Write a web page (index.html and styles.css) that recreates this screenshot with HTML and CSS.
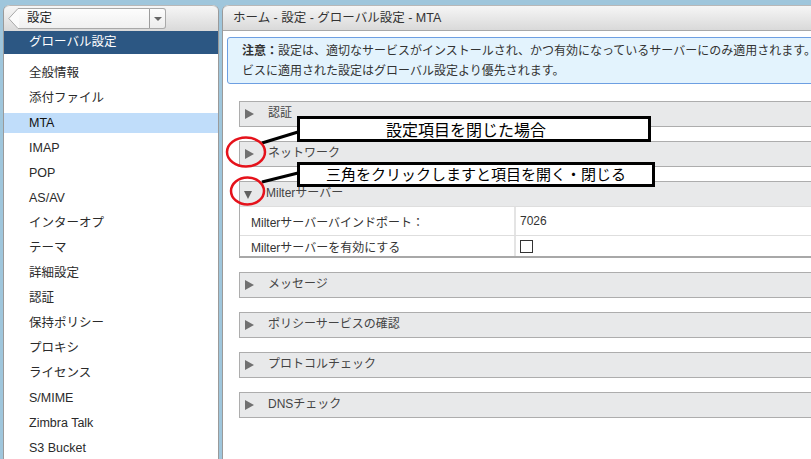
FILE: index.html
```html
<!DOCTYPE html>
<html lang="ja">
<head>
<meta charset="utf-8">
<link rel="stylesheet" href="styles.css">
</head>
<body>
<div class="page">
  <aside class="left">
    <div class="left-head">
      <div class="crumb-btn">
        <svg class="tip" width="11" height="21" viewBox="0 0 11 21"><path d="M11 0.5 L10 0.5 L0.8 10.5 L10 20.5 L11 20.5" fill="#fbfbfb" stroke="#a9a9a9" stroke-width="1"/></svg>
        <div class="crumb-main"><span class="crumb-text">設定</span></div>
        <div class="crumb-drop"><span class="drop-tri"></span></div>
      </div>
    </div>
    <div class="left-sel">グローバル設定</div>
    <ul class="nav">
      <li>全般情報</li>
      <li>添付ファイル</li>
      <li class="active">MTA</li>
      <li>IMAP</li>
      <li>POP</li>
      <li>AS/AV</li>
      <li>インターオプ</li>
      <li>テーマ</li>
      <li>詳細設定</li>
      <li>認証</li>
      <li>保持ポリシー</li>
      <li>プロキシ</li>
      <li>ライセンス</li>
      <li>S/MIME</li>
      <li>Zimbra Talk</li>
      <li>S3 Bucket</li>
    </ul>
  </aside>
  <main class="right">
    <div class="right-head">ホーム - 設定 - グローバル設定 - MTA</div>
    <div class="content">
      <div class="notice"><b>注意：</b>設定は、適切なサービスがインストールされ、かつ有効になっているサーバーにのみ適用されます。サー<br>ビスに適用された設定はグローバル設定より優先されます。</div>
      <div class="sec"><div class="sec-head"><span class="tri-r"></span>認証</div></div>
      <div class="sec"><div class="sec-head"><span class="tri-r"></span>ネットワーク</div></div>
      <div class="sec open">
        <div class="sec-head"><span class="tri-d"></span>Milterサーバー</div>
        <div class="row r1"><div class="lab">Milterサーバーバインドポート：</div><div class="val">7026</div></div>
        <div class="row r2"><div class="lab">Milterサーバーを有効にする</div><div class="val"><span class="chk"></span></div></div>
      </div>
      <div class="sec"><div class="sec-head"><span class="tri-r"></span>メッセージ</div></div>
      <div class="sec"><div class="sec-head"><span class="tri-r"></span>ポリシーサービスの確認</div></div>
      <div class="sec"><div class="sec-head"><span class="tri-r"></span>プロトコルチェック</div></div>
      <div class="sec"><div class="sec-head"><span class="tri-r"></span>DNSチェック</div></div>
    </div>
  </main>
</div>
<svg class="marks" width="811" height="459" viewBox="0 0 811 459">
  <line x1="262" y1="143" x2="298" y2="132" stroke="#000" stroke-width="3"/>
  <line x1="262" y1="182" x2="298" y2="173" stroke="#000" stroke-width="3"/>
  <ellipse cx="246" cy="152" rx="19" ry="14.5" fill="none" stroke="#e5121b" stroke-width="2.5"/>
  <ellipse cx="247.5" cy="191" rx="16.5" ry="13.5" fill="none" stroke="#e5121b" stroke-width="2.5"/>
</svg>
<div class="note note1">設定項目を閉じた場合</div>
<div class="note note2">三角をクリックしますと項目を開く・閉じる</div>
</body>
</html>
```
FILE: styles.css
```css
html, body {
  margin: 0;
  padding: 0;
}
body {
  width: 811px;
  height: 459px;
  overflow: hidden;
  background: #9fc6dc;
  font-family: "Liberation Sans", "Noto Sans CJK JP", sans-serif;
  font-size: 12px;
  color: #333;
  position: relative;
}
.page {
  display: flex;
  padding: 5px 0 0 3px;
  height: 454px;
}
.left {
  width: 214px;
  flex: none;
  background: #fff;
  border: 1px solid #9a9a9a;
  border-top: none;
  border-bottom: none;
  border-radius: 6px 6px 0 0;
  display: flex;
  flex-direction: column;
}
.left-head {
  height: 26px;
  box-sizing: border-box;
  border-top: 1px solid #b8b8b8;
  border-radius: 6px 6px 0 0;
  background: linear-gradient(#f6f6f6, #d9d9d9);
  padding: 2px 0 0 4px;
}
.crumb-btn {
  display: flex;
  height: 21px;
  width: 158px;
}
.tip {
  display: block;
  flex: none;
}
.crumb-main {
  flex: 1;
  height: 21px;
  box-sizing: border-box;
  border-top: 1px solid #a9a9a9;
  border-bottom: 1px solid #a9a9a9;
  background: linear-gradient(#fdfdfd, #f0f0f0);
  display: flex;
  align-items: center;
}
.crumb-text {
  padding-left: 8px;
  font-size: 12.5px;
  color: #222;
  line-height: 19px;
}
.crumb-drop {
  width: 17px;
  height: 21px;
  box-sizing: border-box;
  border: 1px solid #a9a9a9;
  border-left: 1px solid #9c9c9c;
  border-radius: 0 3px 3px 0;
  background: linear-gradient(#fdfdfd, #ececec);
  display: flex;
  align-items: center;
  justify-content: center;
}
.drop-tri {
  width: 0;
  height: 0;
  border-left: 4px solid transparent;
  border-right: 4px solid transparent;
  border-top: 4px solid #666;
}
.left-sel {
  height: 23px;
  background: #2c5783;
  color: #fff;
  font-size: 12.5px;
  line-height: 23px;
  padding-left: 25px;
}
.nav {
  list-style: none;
  margin: 0;
  padding: 9px 0 0 0;
  display: flex;
  flex-direction: column;
  gap: 5px;
}
.nav li {
  height: 20px;
  line-height: 20px;
  padding-left: 25px;
  font-size: 12.5px;
  color: #2a2a2a;
}
.nav li.active {
  background: #c0ddfa;
  color: #111;
}
.right {
  margin-left: 3px;
  width: 640px;
  flex: none;
  background: #fff;
  border-left: 1px solid #9a9a9a;
  border-radius: 6px 0 0 0;
}
.right-head {
  height: 26px;
  box-sizing: border-box;
  border-top: 1px solid #b8b8b8;
  border-bottom: 1px solid #a8a8a8;
  border-radius: 6px 0 0 0;
  background: linear-gradient(#f6f6f6, #d9d9d9);
  line-height: 25px;
  padding-left: 10px;
  font-size: 12.5px;
  color: #333;
}
.content {
  padding: 6px 0 0 4px;
}
.notice {
  border: 1px solid #6d9fe2;
  border-radius: 3px;
  background: #e3f3fd;
  padding: 3px 14px 2px;
  line-height: 20px;
  white-space: nowrap;
  color: #333;
  font-size: 12px;
}
.notice b {
  font-weight: bold;
}
.sec {
  margin: 0 0 14px 12px;
  border: 1px solid #adadad;
}
.notice + .sec {
  margin-top: 17px;
}
.sec-head {
  height: 24px;
  box-sizing: border-box;
  padding-bottom: 3px;
  background: #e8e9ea;
  display: flex;
  align-items: center;
  line-height: 20px;
  font-size: 12px;
  color: #444;
}
.tri-r {
  width: 0;
  height: 0;
  border-top: 5px solid transparent;
  border-bottom: 5px solid transparent;
  border-left: 9px solid #707070;
  margin: 2px 14px 0 5px;
}
.tri-d {
  width: 0;
  height: 0;
  border-left: 4.5px solid transparent;
  border-right: 4.5px solid transparent;
  border-top: 8px solid #606060;
  margin: 4px 14px 0 4px;
}
.row {
  display: flex;
  border-top: 1px solid #dedede;
  font-size: 12px;
  color: #333;
}
.r1 {
  height: 28px;
}
.r2 {
  height: 20px;
}
.sec.open {
  border-bottom: 2px solid #a8a8a8;
}
.lab {
  width: 263px;
  padding-left: 11px;
  border-right: 2px solid #e4e4e4;
  display: flex;
  align-items: center;
}
.val {
  padding-left: 4px;
  display: flex;
  align-items: center;
}
.chk {
  width: 11px;
  height: 11px;
  border: 1px solid #333;
  background: #fff;
  display: block;
}
.marks {
  position: absolute;
  left: 0;
  top: 0;
  pointer-events: none;
}
.note {
  position: absolute;
  box-sizing: border-box;
  border: 3px solid #000;
  background: #fff;
  color: #000;
  text-align: center;
  font-family: "Noto Sans CJK JP", sans-serif;
  white-space: nowrap;
}
.note1 {
  left: 297px;
  top: 116px;
  width: 354px;
  height: 26px;
  font-size: 16px;
  line-height: 20px;
  padding-right: 16px;
}
.note2 {
  left: 297px;
  top: 162px;
  width: 358px;
  height: 25px;
  font-size: 15px;
  line-height: 18px;
}
```
